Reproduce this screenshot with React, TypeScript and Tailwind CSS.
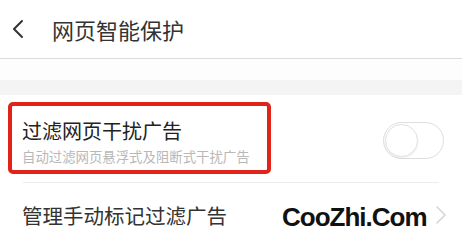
import { ChevronLeft, ChevronRight } from "lucide-react";

const cjk = { fontFamily: '"Noto Sans CJK SC", "Noto Sans", sans-serif' };

export default function App() {
  return (
    <div className="w-[462px] h-[249px] overflow-hidden bg-white relative" style={cjk}>
      <header className="h-[59px] flex items-center border-b border-[#dcdcdc]">
        <ChevronLeft className="ml-[2px] w-[32px] h-[32px] text-[#333]" strokeWidth={1.5} />
        <h1 className="ml-[18px] text-[22px] leading-none text-[#333]">网页智能保护</h1>
      </header>
      <div className="h-[21px] bg-[#fdfdfd]" />
      <div className="h-[15px] bg-[#f4f4f4]" />

      <div className="relative h-[87px] flex items-center justify-between pl-[22px] pr-[18px]">
        <div className="flex flex-col pt-[6px]">
          <span className="text-[20px] leading-[24px] text-[#222]">过滤网页干扰广告</span>
          <span className="mt-[5px] text-[13.4px] leading-[16px] text-[#b8b8b8]">
            自动过滤网页悬浮式及阻断式干扰广告
          </span>
        </div>
        <div className="mt-[4px] w-[61px] h-[37px] rounded-full border border-[#dedede] bg-white relative">
          <div className="absolute left-[1px] top-[1px] w-[33px] h-[33px] rounded-full border border-[#e2e2e2] bg-white shadow-[0_1px_2px_rgba(0,0,0,0.08)]" />
        </div>
        <div className="absolute left-[8px] top-[7px] w-[263px] h-[72px] border-[4px] border-[#e2231a] rounded-[5px] pointer-events-none" />
      </div>

      <div className="mx-[23px] border-t border-[#ececec]" />

      <div className="relative h-[66px] flex items-center justify-between pl-[22px] pr-[5px]">
        <span className="text-[20.5px] leading-none text-[#333] -mt-[2px]">管理手动标记过滤广告</span>
        <ChevronRight className="w-[32px] h-[32px] text-[#d4d4d4] -mt-[2px]" strokeWidth={1.1} />
        <span
          className="absolute left-[282px] top-[21px] text-[26px] leading-none font-bold tracking-[-1px] text-[#111]"
          style={{ fontFamily: '"Liberation Sans", Arial, sans-serif' }}
        >
          CooZhi.Com
        </span>
      </div>
    </div>
  );
}
